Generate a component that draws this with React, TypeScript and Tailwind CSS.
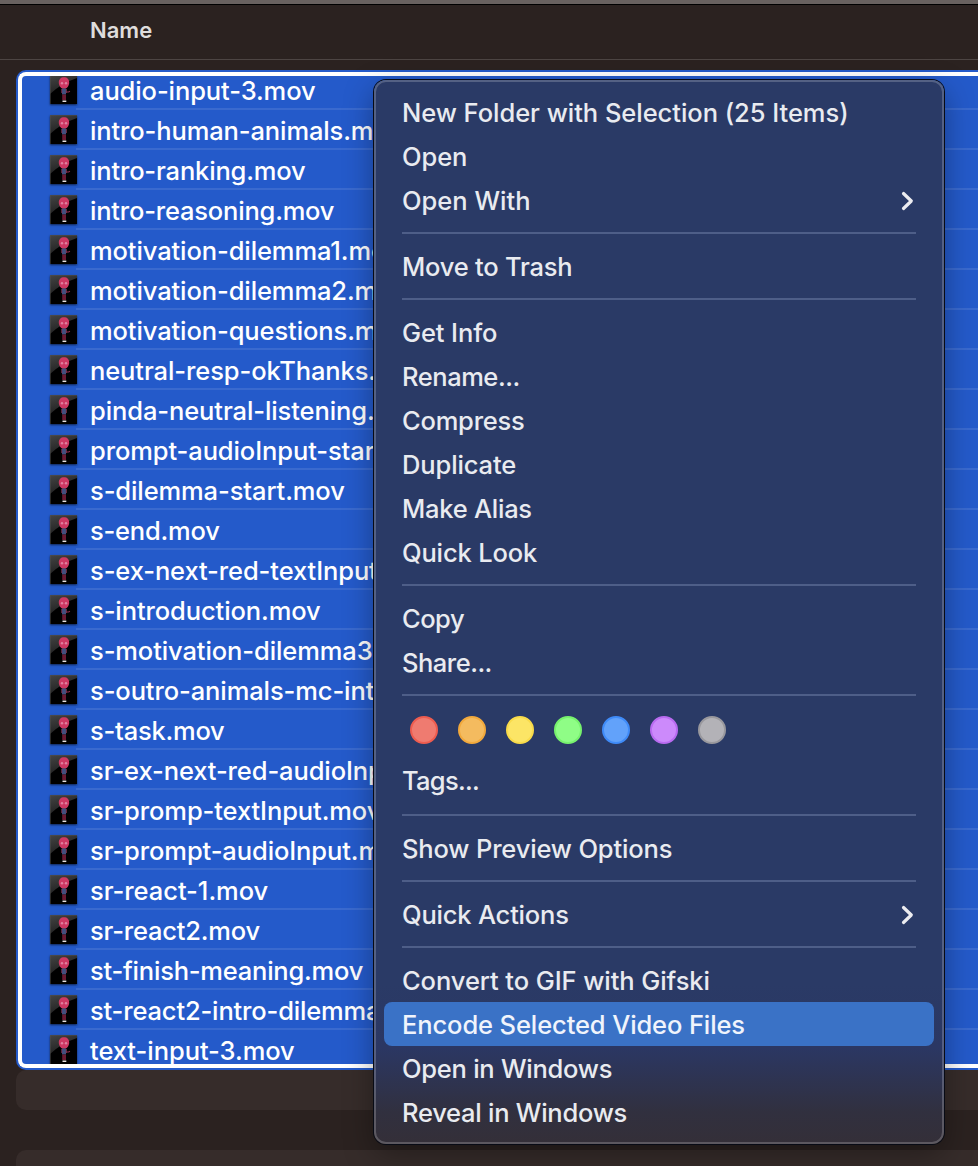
import type { ReactNode } from "react";

const files: { name: string; arm?: boolean; tracking?: string }[] = [
  { name: "audio-input-3.mov", arm: true },
  { name: "intro-human-animals.m", tracking: "tracking-[-0.12px]" },
  { name: "intro-ranking.mov", arm: true, tracking: "tracking-[-0.17px]" },
  { name: "intro-reasoning.mov", arm: true, tracking: "tracking-[-0.2px]" },
  { name: "motivation-dilemma1.mo", arm: true },
  { name: "motivation-dilemma2.m", arm: true },
  { name: "motivation-questions.m", arm: true },
  { name: "neutral-resp-okThanks.", arm: true },
  { name: "pinda-neutral-listening." },
  { name: "prompt-audioInput-star", arm: true },
  { name: "s-dilemma-start.mov" },
  { name: "s-end.mov", tracking: "tracking-[-0.22px]" },
  { name: "s-ex-next-red-textInput" },
  { name: "s-introduction.mov", arm: true },
  { name: "s-motivation-dilemma3" },
  { name: "s-outro-animals-mc-int", arm: true },
  { name: "s-task.mov", tracking: "tracking-[-0.22px]" },
  { name: "sr-ex-next-red-audioInp" },
  { name: "sr-promp-textInput.mov" },
  { name: "sr-prompt-audioInput.m" },
  { name: "sr-react-1.mov", tracking: "tracking-[-0.04px]" },
  { name: "sr-react2.mov", tracking: "tracking-[-0.2px]" },
  { name: "st-finish-meaning.mov", tracking: "tracking-[-0.22px]" },
  { name: "st-react2-intro-dilemma", tracking: "tracking-[-0.16px]" },
  { name: "text-input-3.mov", arm: true, tracking: "tracking-[-0.05px]" },
];

const tags = [
  "bg-[#ef7b70] border-[#ee5c4f]",
  "bg-[#f4bb5f] border-[#f2a93c]",
  "bg-[#fce566] border-[#f9db4a]",
  "bg-[#8ffd86] border-[#77f26d]",
  "bg-[#62a2fa] border-[#3f8bf8]",
  "bg-[#cc8afb] border-[#b96bf0]",
  "bg-[#b3b2b7] border-[#99989d]",
];

function Thumb({ arm }: { arm?: boolean }) {
  return (
    <svg width="27" height="29" viewBox="0 0 27 29" className="shrink-0 shadow-[0_1px_2px_rgba(0,0,0,0.6)]">
      <defs>
        <linearGradient id="gloss" x1="0" y1="0" x2="0.5" y2="1">
          <stop offset="0" stopColor="#454545" />
          <stop offset="1" stopColor="#1c1c1c" />
        </linearGradient>
      </defs>
      <rect width="27" height="29" fill="#000" />
      <path d="M0 0H27V3Q12 8 0 19Z" fill="url(#gloss)" />
      <path d="M0 .5H27M.5 0V29" stroke="#505050" strokeOpacity=".5" />
      <path d="M14 2.200c3.200 0 5.200 2 5.200 5.200 0 2.800-1.700 5.800-4.200 6.300h-2c-2.500-.5-4.200-3.500-4.200-6.300 0-3.200 2-5.200 5.200-5.200z" fill="#cf3863" />
      <circle cx="12" cy="8.300" r="1.200" fill="#e0809f" />
      <circle cx="16" cy="8.300" r="1.200" fill="#e0809f" />
      <path d="M12 13.500h4v6h-4z" fill="#41507f" />
      <path d="M11.700 14v4M16.400 14v4" stroke="#81304d" strokeWidth=".9" />
      {arm && <path d="M16 17h2.500l1.500-.7" stroke="#8d2a4d" strokeWidth="1.100" fill="none" />}
      <path d="M12.200 19.500h3.800v5.500h-3.800z" fill="#6b1a31" />
      <path d="M12.500 26.300h3.800" stroke="#e5dfdf" strokeWidth="1.500" />
    </svg>
  );
}

function Item({
  children,
  arrow,
  active,
  tracking = "tracking-[-0.07px]",
}: {
  children: ReactNode;
  arrow?: boolean;
  active?: boolean;
  tracking?: string;
}) {
  return (
    <div className={`flex h-11 items-center justify-between rounded-[8px] pr-[20px] pl-[18px] ${active ? "bg-[#3a72c6] text-[#f0f4fc]" : ""}`}>
      <span className={`relative top-px ${tracking}`}>{children}</span>
      {arrow && (
        <svg width="13" height="20" viewBox="0 0 13 20" fill="none" className="relative top-px">
          <path d="M2.500 2.500 10.300 10 2.500 17.500" stroke="#ececf0" strokeWidth="3.200" strokeLinecap="round" strokeLinejoin="round" />
        </svg>
      )}
    </div>
  );
}

function Separator({ tall }: { tall?: boolean }) {
  return (
    <div className={`px-[18px] ${tall ? "h-6 pt-3" : "h-[22px] pt-[10px]"}`}>
      <div className="h-[2px] bg-[#4e5e88]" />
    </div>
  );
}

export default function App() {
  return (
    <div className="relative h-[1166px] w-[978px] overflow-hidden bg-[#2b2220] font-['Inter','Liberation_Sans',sans-serif] whitespace-nowrap">
      <div className="h-[5px] border-b border-black bg-[#696260]" />
      <div className="flex h-[55px] items-center border-b border-[#4d4543] pb-[4px] pl-[90px] text-[22px] font-semibold text-[#dfdddc]">
        Name
      </div>
      <div className="pt-[10px] pl-4">
        <div className="h-[1000px] rounded-l-[10px] bg-[#245aca] py-[2px] pl-[2px]">
          <div className="h-[996px] overflow-hidden rounded-l-[8px] border-y-4 border-l-4 border-white">
            <div className="-mt-[6px]">
              {files.map((file) => (
                <div key={file.name} className="flex h-10 pl-[28px]">
                  <div className="w-[26px] pt-[5px]">
                    <Thumb arm={file.arm} />
                  </div>
                  <div className="flex flex-1 items-center border-b-2 border-[#3a6acf] pl-[14px] text-[25.5px] font-medium text-white">
                    <span className={`relative top-[2px] ${file.tracking ?? "tracking-[-0.1px]"}`}>{file.name}</span>
                  </div>
                </div>
              ))}
            </div>
          </div>
        </div>
        <div className="h-10 rounded-l-[10px] bg-[#362c2a]" />
        <div className="mt-10 h-10 rounded-l-[10px] bg-[#362c2a]" />
      </div>

      <div className="absolute top-[80px] left-[374px] h-[1064px] w-[570px] rounded-[12px] border-2 border-white/20 bg-[linear-gradient(180deg,#2a3a66_0%,#2a3a66_85%,#2b3763_91%,#31303f_97%,#342f38_100%)] bg-origin-border p-2 text-[25.5px] font-[450] text-[#e9ebf0] shadow-[0_0_0_1px_#080b15,0_10px_30px_rgba(0,0,0,0.35)]">
        <Item tracking="tracking-[-0.04px]">New Folder with Selection (25 Items)</Item>
        <Item>Open</Item>
        <Item arrow tracking="tracking-normal">Open With</Item>
        <Separator />
        <Item tracking="tracking-[-0.22px]">Move to Trash</Item>
        <Separator />
        <Item tracking="tracking-[-0.1px]">Get Info</Item>
        <Item tracking="tracking-[-0.45px]">Rename...</Item>
        <Item tracking="tracking-[-0.22px]">Compress</Item>
        <Item tracking="tracking-[-0.12px]">Duplicate</Item>
        <Item tracking="tracking-[-0.25px]">Make Alias</Item>
        <Item tracking="tracking-[-0.16px]">Quick Look</Item>
        <Separator />
        <Item tracking="tracking-[-0.5px]">Copy</Item>
        <Item tracking="tracking-[-0.5px]">Share...</Item>
        <Separator />
        <div className="flex h-[52px] gap-5 pt-[10px] pl-[26px]">
          {tags.map((tag) => (
            <div key={tag} className={`size-7 rounded-full border-2 ${tag}`} />
          ))}
        </div>
        <Item tracking="tracking-[-0.7px]">Tags...</Item>
        <Separator tall />
        <Item tracking="tracking-[-0.16px]">Show Preview Options</Item>
        <Separator />
        <Item arrow tracking="tracking-[-0.2px]">Quick Actions</Item>
        <Separator />
        <Item tracking="tracking-[-0.08px]">Convert to GIF with Gifski</Item>
        <Item active tracking="tracking-[-0.11px]">Encode Selected Video Files</Item>
        <Item tracking="tracking-[-0.25px]">Open in Windows</Item>
        <Item tracking="tracking-[-0.25px]">Reveal in Windows</Item>
      </div>
    </div>
  );
}
